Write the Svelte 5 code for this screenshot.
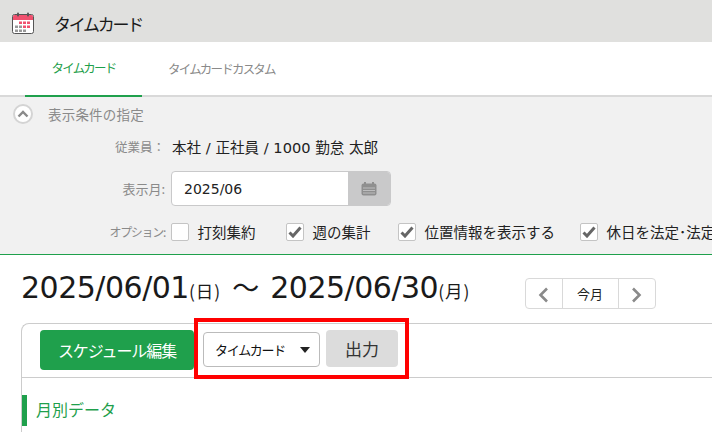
<script>
  const options = [
    { label: '打刻集約', checked: false },
    { label: '週の集計', checked: true },
    { label: '位置情報を表示する', checked: true },
    { label: '休日を法定･法定外で分ける', checked: true }
  ];
</script>

<div class="page">
  <header class="title">
    <svg class="cal" width="24" height="24" viewBox="0 0 24 24">
      <rect x="1.5" y="3.5" width="21" height="19" rx="2" fill="#fff" stroke="#555" />
      <path d="M2 5.5a1.5 1.5 0 0 1 1.5-1.5h17a1.5 1.5 0 0 1 1.5 1.5V9H2z" fill="#f0506e" />
      <rect x="6" y="1.5" width="2" height="4" rx="1" fill="#555" />
      <rect x="16" y="1.5" width="2" height="4" rx="1" fill="#555" />
      <g fill="#f0506e">
        <rect x="8" y="10.5" width="3" height="2.5" /><rect x="12" y="10.5" width="3" height="2.5" /><rect x="16" y="10.5" width="3" height="2.5" />
        <rect x="12" y="14.5" width="3" height="2.5" /><rect x="16" y="14.5" width="3" height="2.5" />
      </g>
      <g fill="#999">
        <rect x="4" y="14.5" width="3" height="2.5" /><rect x="8" y="14.5" width="3" height="2.5" />
        <rect x="4" y="18.5" width="3" height="2.5" /><rect x="8" y="18.5" width="3" height="2.5" /><rect x="12" y="18.5" width="3" height="2.5" />
      </g>
    </svg>
    <h1>タイムカード</h1>
  </header>

  <nav class="tabs">
    <span class="tab active">タイムカード</span>
    <span class="tab">タイムカードカスタム</span>
  </nav>

  <section class="filter">
    <div class="filter-head">
      <span class="toggle">
        <svg width="12" height="8" viewBox="0 0 12 8"><path d="M1.5 6.5 6 2l4.5 4.5" fill="none" stroke="#8a8a8a" stroke-width="2.4" /></svg>
      </span>
      <span>表示条件の指定</span>
    </div>
    <div class="row employee">
      <span class="label">従業員：</span>
      <span class="value">本社 / 正社員 / 1000 勤怠 太郎</span>
    </div>
    <div class="row month">
      <span class="label lg">表示月:</span>
      <div class="date">
        <span class="date-value">2025/06</span>
        <span class="date-btn">
          <svg width="16" height="14" viewBox="0 0 16 14">
            <rect x="0.5" y="1.5" width="15" height="12" rx="2" fill="#8f8f8f" />
            <rect x="3" y="0" width="2" height="3" fill="#8f8f8f" /><rect x="11" y="0" width="2" height="3" fill="#8f8f8f" />
            <path d="M2 6h12M2 8.5h12M2 11h12" stroke="#c9c9ca" stroke-width=".8" />
          </svg>
        </span>
      </div>
    </div>
    <div class="row opts">
      <span class="label narrow">オプション:</span>
      <div class="opt-list">
        {#each options as o}
          <span class="opt">
            <span class="box">
              {#if o.checked}
                <svg width="14" height="12" viewBox="0 0 14 12"><path d="M1.5 6.5 5 10l7.5-8.5" fill="none" stroke="#666" stroke-width="3" /></svg>
              {/if}
            </span>
            <span>{o.label}</span>
          </span>
        {/each}
      </div>
    </div>
  </section>

  <section class="range">
    <h2>2025/06/01<small>(日)</small><span class="tilde">～</span>2025/06/30<small>(月)</small></h2>
    <div class="pager">
      <span class="pg arrow"><svg width="11" height="16" viewBox="0 0 11 16"><path d="M9 1.5 2.5 8 9 14.5" fill="none" stroke="#8a8a8a" stroke-width="2.6" /></svg></span>
      <span class="pg today">今月</span>
      <span class="pg arrow"><svg width="11" height="16" viewBox="0 0 11 16"><path d="M2 1.5 8.5 8 2 14.5" fill="none" stroke="#8a8a8a" stroke-width="2.6" /></svg></span>
    </div>
  </section>

  <section class="panel">
    <div class="toolbar">
      <button class="primary">スケジュール編集</button>
      <div class="highlight">
        <div class="select"><span>タイムカード</span><i class="caret"></i></div>
        <button class="output">出力</button>
      </div>
    </div>
    <div class="section-title">月別データ</div>
  </section>
</div>

<style>
  :global(body) { margin: 0; background: #fff; }
  .page {
    width: 712px;
    height: 432px;
    overflow: hidden;
    font-family: "DejaVu Sans", "Noto Sans CJK JP", sans-serif;
    color: #222;
  }
  .title {
    height: 42px;
    background: #e0e0de;
    display: flex;
    align-items: center;
    padding: 4px 0 0 11px;
    box-sizing: border-box;
  }
  .cal { margin-right: 19px; flex: none; }
  h1 { margin: 0; font: 400 17px "Noto Sans CJK JP", sans-serif; color: #1a1a1a; letter-spacing: -2.3px; }
  .tabs {
    height: 55px;
    box-sizing: border-box;
    display: flex;
    padding-left: 25px;
    border-bottom: 2px solid #d9d9d9;
    font: 400 12.5px "Noto Sans CJK JP", sans-serif;
    letter-spacing: -1.8px;
  }
  .tab { margin-bottom: -2px; height: 55px; box-sizing: border-box; display: flex; align-items: center; justify-content: center; color: #8a8a8a; padding-bottom: 2px; white-space: nowrap; }
  .active { width: 117px; color: #1fa04c; border-bottom: 2px solid #1fa04c; }
  .tab + .tab { padding-left: 26px; }
  .filter {
    height: 158px;
    box-sizing: border-box;
    background: #f1f1f1;
    border-bottom: 1px solid #1fa04c;
    padding: 7px 0 0 13px;
    font-family: "Noto Sans CJK JP", sans-serif;
  }
  .filter-head { display: flex; align-items: center; gap: 15px; font-size: 13.5px; letter-spacing: 0.2px; color: #8a8a8a; height: 20px; }
  .toggle {
    width: 20px; height: 20px; border-radius: 50%; background: #fff; border: 2px solid #d4d4d4;
    box-sizing: border-box; display: flex; align-items: center; justify-content: center;
  }
  .row { display: flex; align-items: center; margin-left: -13px; }
  .label { width: 165px; text-align: right; font-size: 12.5px; color: #8a8a8a; flex: none; white-space: nowrap; }
  .label.lg { font-size: 13px; }
  .employee { margin-top: 12px; height: 20px; }
  .value { color: #222; margin-left: 7px; font-size: 14.6px; white-space: nowrap; font-family: "DejaVu Sans", "Noto Sans CJK JP", sans-serif; }
  .month { margin-top: 15px; }
  .date {
    margin-left: 6px; width: 220px; height: 35px; box-sizing: border-box; border: 1px solid #c9c9ca; border-radius: 4px;
    background: #fff; display: flex; align-items: center; justify-content: space-between; overflow: hidden;
  }
  .date-value { padding-left: 12px; font: 14px "DejaVu Sans", sans-serif; color: #222; }
  .date-btn { width: 42px; height: 100%; background: #c9c9ca; display: flex; align-items: center; justify-content: center; }
  .opts { margin-top: 15px; }
  .opt-list { display: grid; grid-template-columns: 115px 112px 182px max-content; margin-left: 6px; white-space: nowrap; }
  .narrow { font-size: 12px; letter-spacing: -1.3px; }
  .opt { display: flex; align-items: center; gap: 8.5px; font-size: 14.5px; color: #222; }
  .box { width: 18px; height: 18px; box-sizing: border-box; background: #fff; border: 1px solid #c4c4c4; border-radius: 2px; display: flex; align-items: center; justify-content: center; }
  .range { display: flex; align-items: center; height: 68px; box-sizing: border-box; padding: 0 0 5px 21px; }
  h2 { margin: 0; font: 400 30px "DejaVu Sans", "Noto Sans CJK JP", sans-serif; color: #1a1a1a; white-space: nowrap; letter-spacing: -0.5px; }
  h2 small { font: 400 17.5px "Noto Sans CJK JP", sans-serif; letter-spacing: 1px; }
  .tilde { font: 400 27px "Noto Sans CJK JP", sans-serif; margin: 0 11px; letter-spacing: 0; }
  .pager {
    margin: 14px 0 0 54px; display: flex; height: 31px; border: 1px solid #d9d9d9; border-radius: 4px; box-sizing: border-box; background: #fff;
  }
  .pg { display: flex; align-items: center; justify-content: center; }
  .arrow { width: 36px; padding-top: 2px; }
  .today { width: 57px; box-sizing: border-box; border-left: 1px solid #d9d9d9; border-right: 1px solid #d9d9d9; font: 13px "Noto Sans CJK JP", sans-serif; color: #222; }
  .panel { margin-left: 21px; border: 1px solid #ccc; border-right: 0; border-bottom: 0; border-top-left-radius: 8px; height: 120px; box-sizing: border-box; font-family: "Noto Sans CJK JP", sans-serif; }
  .toolbar { height: 54px; box-sizing: border-box; border-bottom: 1px solid #ccc; display: flex; padding: 6px 0 0 18px; position: relative; }
  button { border: 0; margin: 0; font-family: inherit; border-radius: 4px; padding: 0; }
  .primary { width: 154px; height: 40px; background: #1fa04c; color: #fff; font-size: 16px; letter-spacing: -1.1px; white-space: nowrap; }
  .highlight {
    position: absolute; left: 172px; top: -6px; width: 215px; height: 61px; box-sizing: border-box; border: 4px solid #f00;
    display: flex; align-items: flex-start; padding: 8px 0 0 5px; z-index: 1;
  }
  .select {
    width: 117px; height: 35px; margin-top: 2px; box-sizing: border-box; border: 1px solid #bbb; border-radius: 4px; background: #fff;
    display: flex; align-items: center; justify-content: space-between; padding: 0 9px 0 11px; font-size: 13px; letter-spacing: -1.3px; color: #111; white-space: nowrap;
  }
  .caret { border: 5px solid transparent; border-top: 6px solid #222; border-bottom: 0; width: 0; height: 0; }
  .output { width: 72px; height: 37px; margin-left: 6px; background: #dcdcdc; color: #333; font-size: 17px; }
  .section-title { margin: 17px 0 0 0; border-left: 5px solid #1fa04c; height: 31px; line-height: 29px; padding-left: 9px; font-size: 16px; color: #1fa04c; }
</style>
